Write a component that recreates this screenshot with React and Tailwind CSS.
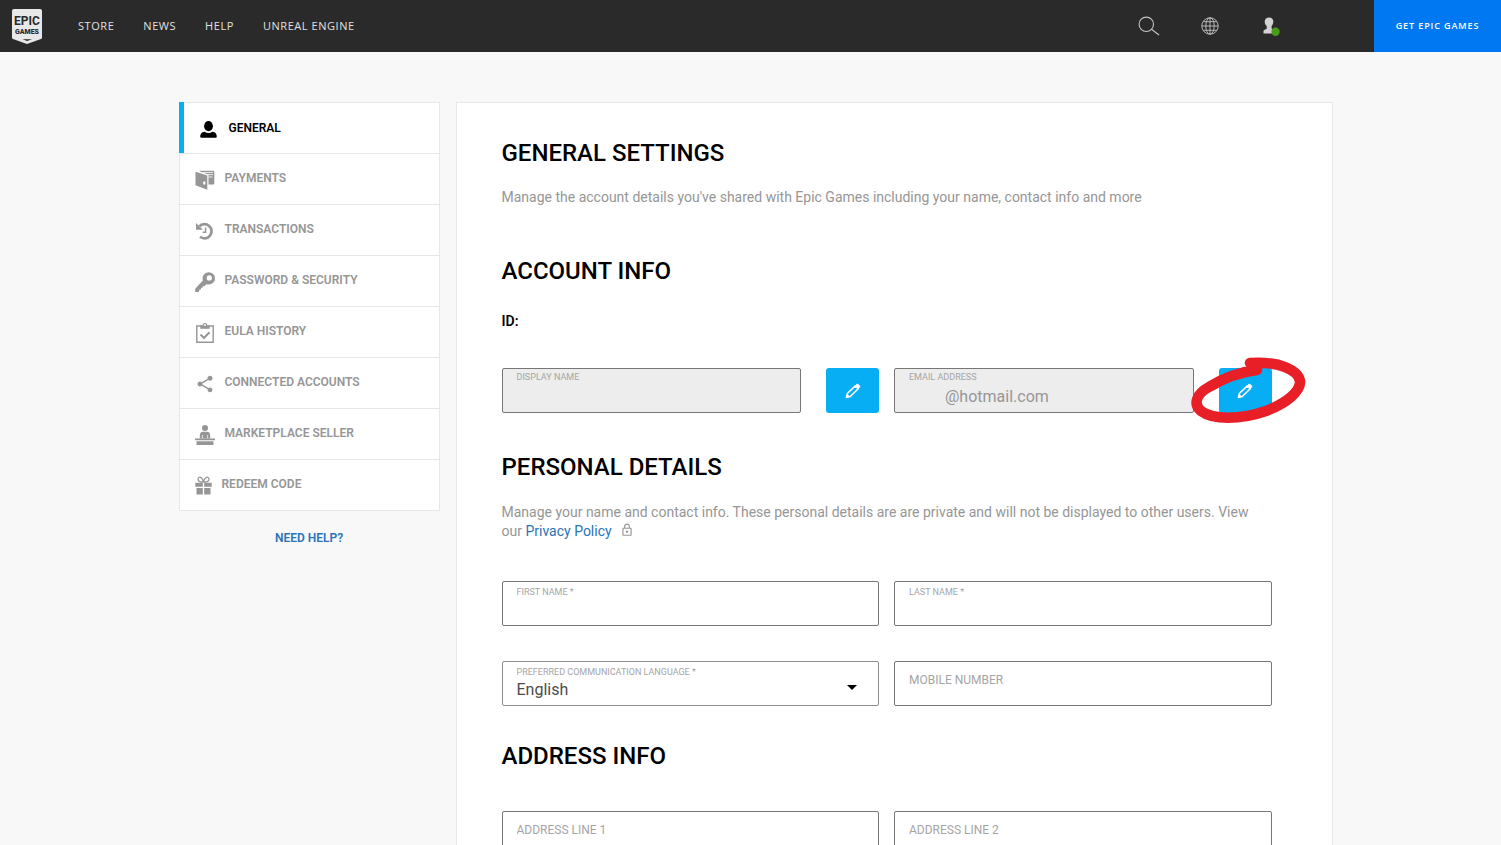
import { useId } from "react";
import { MdShare, MdOutlineLock } from "react-icons/md";

function EpicLogo() {
  return (
    <svg viewBox="0 0 30 35" className="h-[35px] w-[30px]" role="img" aria-label="Epic Games">
      <path d="M2 0H28Q30 0 30 2V28.500Q30 29.500 29 30L15 35L1 30Q0 29.500 0 28.500V2Q0 0 2 0Z" fill="#e8e8e8" />
      <text x="15" y="16" textAnchor="middle" className="fill-[#2a2a2a] font-['Liberation_Sans_Narrow',Roboto,sans-serif] text-[12px] font-bold">EPIC</text>
      <text x="15" y="25" textAnchor="middle" className="fill-[#2a2a2a] font-[Roboto,sans-serif] text-[7px] font-black">GAMES</text>
      <path d="M10.500 30.200H20L15.200 32Z" fill="#2a2a2a" />
    </svg>
  );
}

function SearchIcon() {
  return (
    <svg viewBox="0 0 22 20" className="h-5 w-[22px]" fill="none" stroke="#c4c4c4" strokeWidth="1.100">
      <circle cx="8.300" cy="8.300" r="7.200" />
      <path d="M13.500 13.300L21 19" />
    </svg>
  );
}

function GlobeIcon() {
  return (
    <svg viewBox="0 0 18 18" className="size-[18px]" fill="none" stroke="#c4c4c4" strokeWidth="0.900">
      <circle cx="9" cy="9" r="8.200" />
      <ellipse cx="9" cy="9" rx="4.200" ry="8.200" />
      <path d="M9 0.800V17.200M0.800 9H17.200M2.200 4.700H15.800M2.200 13.300H15.800" />
    </svg>
  );
}

function UserStatusIcon() {
  return (
    <svg viewBox="0 0 17 19" className="h-[19px] w-[17px]">
      <path d="M6 0.500C8.700 0.500 10.300 2.200 10.300 4.700C10.300 6.500 9.400 7.900 8.600 9V11.500L12 14V16.500H0.500V14.200Q0.500 13 1.700 12.700L3.700 11.800V9C2.600 8 1.700 6.500 1.700 4.700C1.700 2.200 3.300 0.500 6 0.500Z" fill="#d2d2d2" />
      <circle cx="12.500" cy="14.800" r="4.200" fill="#4b9b1b" />
    </svg>
  );
}

function PersonIcon() {
  return (
    <svg viewBox="0 0 17 17" className="size-[17px]" fill="currentColor">
      <ellipse cx="8.500" cy="5.200" rx="4.400" ry="5.100" />
      <path d="M0.200 15.500Q0.200 11.500 4.500 10.800Q8.500 13.200 12.500 10.800Q16.800 11.500 16.800 15.500Q16.800 16.800 15.500 16.800H1.500Q0.200 16.800 0.200 15.500Z" />
    </svg>
  );
}

function WalletIcon() {
  return (
    <svg viewBox="0 0 20 20" className="size-5" fill="currentColor">
      <path d="M3.500 0.800H18Q19.300 0.800 19.300 2.100V13.300Q19.300 14.500 18 14.500H13.500V4.800Z" />
      <path d="M8 2.500H18M12 4.600H18M13.500 7H17.500" stroke="#fff" strokeWidth="0.800" fill="none" />
      <path d="M0.500 1.700L12.300 5.600V19.800L0.500 15.300Z" />
      <ellipse cx="9.300" cy="13" rx="1.200" ry="1.800" fill="#fff" />
    </svg>
  );
}

function HistoryIcon() {
  return (
    <svg viewBox="0 0 20 20" className="size-5" fill="none" stroke="currentColor">
      <path d="M4.300 5.300A7.100 7.100 0 1 1 5 15.800" strokeWidth="2.700" />
      <path d="M1 2V8.700H7.900Z" fill="currentColor" stroke="none" />
      <path d="M10.600 6.500V11.300H7.600" strokeWidth="1.500" />
    </svg>
  );
}

function KeyIcon() {
  return (
    <svg viewBox="0 0 20 20" className="size-5" fill="currentColor">
      <path fillRule="evenodd" d="M13.800 0.200A6.200 6.200 0 0 1 13.800 12.600Q12.500 12.600 11.500 12.200L9.200 14.200H7.700V15.800H6V17.400H4.300V18.900L3.200 19.900H0.200V16.700L7.900 8.500Q7.500 7.500 7.500 6.400A6.200 6.200 0 0 1 13.800 0.200ZM14.300 3.300A2.600 2.600 0 1 0 14.300 8.500A2.600 2.600 0 1 0 14.300 3.300Z" />
    </svg>
  );
}

function ClipboardIcon() {
  return (
    <svg viewBox="0 0 20 20" className="size-5" fill="none" stroke="currentColor">
      <path d="M1.800 3H18.200V19.200H1.800Z" strokeWidth="1.400" />
      <path d="M5.300 2.500H14.700V5.800H5.300Z" fill="currentColor" stroke="none" />
      <circle cx="10" cy="2.100" r="1.600" strokeWidth="1.200" fill="#fff" />
      <path d="M5.500 11.500L9 15L14.500 9.300" strokeWidth="2" />
    </svg>
  );
}

function SellerIcon() {
  return (
    <svg viewBox="0 0 20 20" className="size-5" fill="currentColor">
      <circle cx="10" cy="3" r="3" />
      <path d="M4.800 13.500V10.500Q4.800 6.700 8 6.700H12Q15.200 6.700 15.200 10.500V13.500Z" />
      <path d="M7.400 13.500V10M12.600 13.500V10" stroke="#fff" strokeWidth="0.700" />
      <path d="M0 13.500H20V15.200H0ZM1.500 16.200H18.500V20H1.500Z" />
    </svg>
  );
}

function GiftIcon() {
  return (
    <svg viewBox="0 0 17 19" className="h-[19px] w-[17px]" fill="currentColor">
      <path d="M8.500 6Q2.800 6.200 3 3Q3.800 0 6.500 2Q8 3.500 8.500 6Q9 3.500 10.500 2Q13.200 0 14 3Q14.200 6.200 8.500 6Z" fill="none" stroke="currentColor" strokeWidth="1.300" />
      <path d="M0.300 6.700H7.800V10.800H0.300ZM9.200 6.700H16.700V10.800H9.200ZM1.500 12H7.800V18.500H1.500ZM9.200 12H15.500V18.500H9.200Z" />
    </svg>
  );
}

function PencilIcon() {
  return (
    <svg viewBox="0 0 16 16" className="size-4" fill="none" stroke="currentColor" strokeLinejoin="round">
      <path d="M1.500 14.500L2.300 10.500L10.300 2.900L13.200 5.700L5.300 13.500Z" strokeWidth="1.600" />
      <path d="M10.300 2.700L11.500 1.500Q12.500 0.800 13.500 1.700L14.400 2.600Q15.200 3.500 14.400 4.500L13.200 5.700Z" fill="currentColor" strokeWidth="1" />
      <path d="M1.200 14.800L2.200 10.800L5.200 13.700Z" fill="currentColor" stroke="none" />
    </svg>
  );
}

const SIDE_ITEMS = [
  { label: "PAYMENTS", Icon: WalletIcon },
  { label: "TRANSACTIONS", Icon: HistoryIcon },
  { label: "PASSWORD & SECURITY", Icon: KeyIcon },
  { label: "EULA HISTORY", Icon: ClipboardIcon },
  { label: "CONNECTED ACCOUNTS", Icon: () => <MdShare className="size-5" /> },
  { label: "MARKETPLACE SELLER", Icon: SellerIcon },
  { label: "REDEEM CODE", Icon: GiftIcon },
];

function Header() {
  const link = "text-[11px] leading-4 font-medium tracking-wider text-[#e0e0e0]";
  return (
    <header className="flex h-[52px] items-stretch justify-between bg-[#2a2a2a] font-['Open_Sans',sans-serif]">
      <div className="flex items-center pl-3">
        <a href="#home"><EpicLogo /></a>
        <nav className="flex gap-[29px] pl-9">
          <a href="#store" className={link}>STORE</a>
          <a href="#news" className={link}>NEWS</a>
          <a href="#help" className={link}>HELP</a>
          <a href="#unreal" className={link}>UNREAL ENGINE</a>
        </nav>
      </div>
      <div className="flex items-center">
        <button type="button" aria-label="Search" className="mr-[41px]"><SearchIcon /></button>
        <button type="button" aria-label="Language" className="mr-11"><GlobeIcon /></button>
        <button type="button" aria-label="Account" className="mr-[94px]"><UserStatusIcon /></button>
        <a href="#get" className="flex w-[127px] items-center justify-center self-stretch bg-[#0078f2] text-[9px] font-semibold tracking-widest text-white">
          GET EPIC GAMES
        </a>
      </div>
    </header>
  );
}

function Sidebar() {
  return (
    <aside className="w-[261px] shrink-0 text-xs font-semibold">
      <nav className="border border-[#e7e7e7] bg-white">
        <a href="#general" className="-mt-px -ml-px flex h-[51px] items-center gap-3 border-l-5 border-[#08aef3] pl-4 text-black">
          <span className="pt-[3px]"><PersonIcon /></span>
          GENERAL
        </a>
        {SIDE_ITEMS.map(({ label, Icon }) => (
          <a key={label} href="#section" className="flex h-[51px] items-center gap-[10px] border-t border-[#e7e7e7] pb-[2px] pl-[15px] text-[#969696]">
            <span className="pt-[3px]"><Icon /></span>
            {label}
          </a>
        ))}
      </nav>
      <a href="#help" className="block pt-[18px] text-center leading-[18px] text-[#2b73b7]">NEED HELP?</a>
    </aside>
  );
}

function Heading({ children }) {
  return <h2 className="text-2xl leading-8 font-medium text-black">{children}</h2>;
}

function FloatField({ label, value, disabled, className = "" }) {
  const id = useId();
  return (
    <div className={`flex h-[45px] flex-col rounded-xs border border-[#777] px-[14px] ${disabled ? "bg-[#ededed]" : "bg-white pt-[2px]"} ${className}`}>
      <label htmlFor={id} className="pt-[2px] text-[9px] leading-3 text-[#a5a5a5]">{label}</label>
      <input id={id} type="text" defaultValue={value} disabled={disabled} className="h-[26px] w-full bg-transparent pl-9 text-base text-[#969696] outline-none" />
    </div>
  );
}

function PlaceholderField({ label }) {
  return (
    <input type="text" aria-label={label} placeholder={label} className="h-[45px] w-full rounded-xs border border-[#777] bg-white px-[14px] pb-2 text-xs text-[#555] placeholder:text-[#a5a5a5]" />
  );
}

function LanguageField() {
  const id = useId();
  return (
    <div className="relative flex h-[45px] flex-col rounded-xs border border-[#8d8d8d] bg-white px-[14px] pt-1">
      <label htmlFor={id} className="text-[9px] leading-3 text-[#a5a5a5]">PREFERRED COMMUNICATION LANGUAGE *</label>
      <select id={id} className="h-6 w-full appearance-none bg-transparent text-base leading-6 text-[#4b4b4b] outline-none">
        <option>English</option>
      </select>
      <svg viewBox="0 0 10 5" className="pointer-events-none absolute top-[23px] right-[21px] h-[5px] w-[10px]"><path d="M0 0H10L5 5Z" fill="#000" /></svg>
    </div>
  );
}

function EditButton({ label }) {
  return (
    <button type="button" aria-label={label} className="flex h-[45px] w-[53px] shrink-0 items-center justify-center rounded-[3px] bg-[#08aef3] text-white">
      <PencilIcon />
    </button>
  );
}

export default function App() {
  return (
    <div className="h-screen overflow-hidden bg-[#f8f8f8] font-[Roboto,sans-serif]">
      <Header />
      <div className="mx-auto flex max-w-[1170px] items-start gap-4 pt-[50px] pr-[3px] pl-[13px]">
        <Sidebar />
        <main className="min-w-0 flex-1 border border-[#e7e7e7] bg-white pt-[34px] pr-[60px] pb-12 pl-[45px]">
          <Heading>GENERAL SETTINGS</Heading>
          <p className="pt-[18px] text-sm leading-5 text-[#969696]">
            Manage the account details you've shared with Epic Games including your name, contact info and more
          </p>
          <div className="pt-12"><Heading>ACCOUNT INFO</Heading></div>
          <p className="pt-6 text-sm leading-5 font-semibold text-black">ID:</p>
          <div className="grid grid-cols-2 gap-[15px] pt-[37px]">
            <div className="flex gap-[25px]">
              <FloatField label="DISPLAY NAME" disabled className="flex-1" />
              <EditButton label="Edit display name" />
            </div>
            <div className="flex gap-[25px]">
              <FloatField label="EMAIL ADDRESS" value="@hotmail.com" disabled className="flex-1" />
              <div className="relative shrink-0">
                <EditButton label="Edit email address" />
                <svg viewBox="1189 355 118 70" className="pointer-events-none absolute -top-[13px] -left-[30px] h-[70px] w-[118px] max-w-none" fill="none" stroke="#e81f27" strokeWidth="10.500" strokeLinecap="round" strokeLinejoin="round">
                  <path d="M1257 370C1240 372 1222 379 1209 387C1196 394 1193 404 1201 411C1213 420 1240 420 1266 411C1287 403 1301 391 1300 381C1298 370 1279 361 1250 363L1257 369" />
                </svg>
              </div>
            </div>
          </div>
          <div className="pt-[38px]"><Heading>PERSONAL DETAILS</Heading></div>
          <p className="pt-5 text-sm leading-[19px] text-[#969696]">
            Manage your name and contact info. These personal details are are private and will not be displayed to other users. View our{" "}
            <a href="#privacy" className="text-[#2b73b7]">Privacy Policy</a>
            <MdOutlineLock className="ml-2 inline size-[14px] align-[-1px]" />
          </p>
          <div className="grid grid-cols-2 gap-x-[15px] gap-y-[35px] pt-10">
            <FloatField label="FIRST NAME *" />
            <FloatField label="LAST NAME *" />
            <LanguageField />
            <PlaceholderField label="MOBILE NUMBER" />
          </div>
          <div className="pt-[34px]"><Heading>ADDRESS INFO</Heading></div>
          <div className="grid grid-cols-2 gap-[15px] pt-[39px]">
            <PlaceholderField label="ADDRESS LINE 1" />
            <PlaceholderField label="ADDRESS LINE 2" />
          </div>
        </main>
      </div>
    </div>
  );
}
